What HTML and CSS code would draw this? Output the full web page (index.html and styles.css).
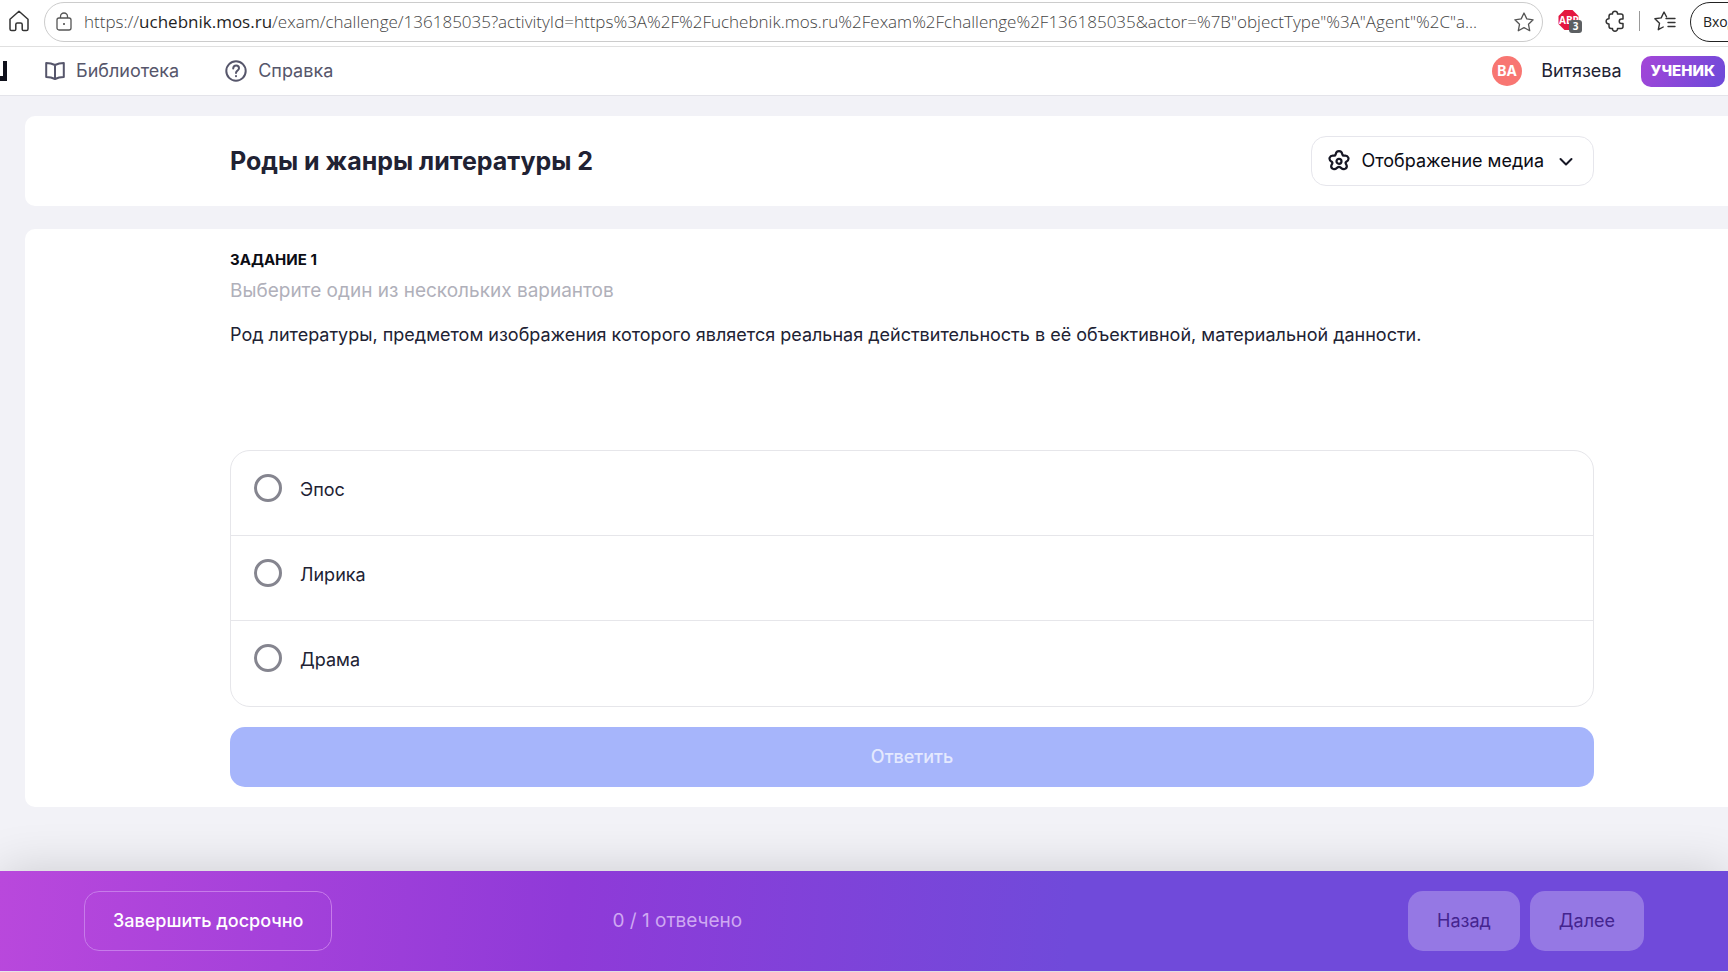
FILE: index.html
```html
<!DOCTYPE html>
<html lang="ru">
<head>
<meta charset="utf-8">
<meta name="viewport" content="width=device-width, initial-scale=1">
<title>Роды и жанры литературы 2</title>
<link rel="stylesheet" href="styles.css">
</head>
<body>
<div class="browser">
  <button class="icon-button" aria-label="Домой">
    <svg width="20" height="22" viewBox="0 0 20 22" fill="none" stroke="#333" stroke-width="1.5" stroke-linejoin="round"><path d="M1 9.2 10 1.2l9 8V19q0 1.6-1.6 1.6h-2.8q-1.4 0-1.4-1.4v-4.6q0-1.6-1.6-1.6H8.400q-1.600 0-1.600 1.600v4.600q0 1.400-1.400 1.400H2.600Q1 20.600 1 19Z"/></svg>
  </button>
  <div class="address">
    <svg width="16" height="20" viewBox="0 0 16 20" fill="none" stroke="#555" stroke-width="1.300"><rect x="1" y="6" width="14" height="12" rx="2"/><path d="M4.500 6V4.500a3.500 3.500 0 0 1 7 0V6"/><circle cx="8" cy="12" r="1" fill="#444" stroke="none"/></svg>
    <span class="url">https://<span class="host">uchebnik.mos.ru</span>/exam/challenge/136185035?activityId=https%3A%2F%2Fuchebnik.mos.ru%2Fexam%2Fchallenge%2F136185035&amp;actor=%7B"objectType"%3A"Agent"%2C"a...</span>
    <button class="icon-button" aria-label="Добавить в избранное">
      <svg width="20" height="20" viewBox="0 0 20 20" fill="none" stroke="#555" stroke-width="1.300" stroke-linejoin="round"><path d="m10 1 2.800 5.900 6.300.9-4.600 4.500 1.200 6.400-5.700-3.100-5.700 3.100 1.200-6.400L.9 7.800l6.300-.9Z"/></svg>
    </button>
  </div>
  <div class="extensions">
    <button class="icon-button abp" aria-label="Adblock Plus">
      <svg width="25" height="24" viewBox="0 0 25 24"><path d="M6.500 1h8l6 6v8l-6 6h-8l-6-6V7Z" fill="#e4173f"/><text x="1" y="15" class="abp-label">ABP</text></svg>
      <span class="badge">3</span>
    </button>
    <button class="icon-button" aria-label="Расширения">
      <svg width="20" height="22" viewBox="0 0 20 22" fill="none" stroke="#333" stroke-width="1.500" stroke-linejoin="round"><path d="M4 6.500Q4 4 6 4h1.500C7 .2 13 .2 12.500 4H16q2 0 2 2v3h-1.500c-3 0-3 4.500 0 4.500H18v3q0 2-2 2h-3.500c.5 3.500-5.500 3.500-5 0H6q-2 0-2-2.500v-2C.2 14 .2 8.500 4 8.800Z"/></svg>
    </button>
    <span class="separator"></span>
    <button class="icon-button" aria-label="Избранное">
      <svg width="22" height="20" viewBox="0 0 22 20" fill="none" stroke="#333" stroke-width="1.400" stroke-linejoin="round" stroke-linecap="round"><path d="M12.500 5.800 10 1 7.200 6.900.9 7.800l4.600 4.500-1.200 6.400 4.900-2.700M12 7.500h9M14 11.500h7M14 15.500h7"/></svg>
    </button>
  </div>
  <button class="sign-in">Вход</button>
</div>

<header class="header">
  <svg class="logo" width="8" height="20" viewBox="0 0 8 20"><path d="M3 0h4v20H0v-5h3Z" fill="#10111c"/></svg>
  <nav class="nav">
    <a href="#library"><svg width="20" height="20" viewBox="0 0 20 20" fill="none" stroke="#56566b" stroke-width="2" stroke-linejoin="round"><path d="M10 4C7 2.500 4 2 1.200 2v14c3 0 6 .5 8.800 2 2.800-1.500 5.800-2 8.800-2V2C16 2 13 2.500 10 4Zm0 0v14"/></svg>Библиотека</a>
    <a href="#help"><svg width="22" height="22" viewBox="0 0 22 22" fill="none" stroke="#56566b" stroke-width="2" stroke-linecap="round"><circle cx="11" cy="11" r="9.700"/><path d="M8.200 8.500c.2-4 5.800-3.700 5.800-.3 0 2.300-3 2.300-3 4.800"/><path d="M11 16v.2"/></svg>Справка</a>
  </nav>
  <div class="user">
    <span class="avatar">ВА</span>
    <span class="user-name">Витязева</span>
    <span class="role">УЧЕНИК</span>
  </div>
</header>

<main class="main">
  <section class="card title-card">
    <h1>Роды и жанры литературы 2</h1>
    <button class="media-button">
      <svg width="22" height="22" viewBox="0 0 22 22" fill="none" stroke="#161725" stroke-width="2.200" stroke-linejoin="round"><path d="M7.600 4.600C8 2.200 9 1.200 11 1.200s3 1 3.400 3.400c.3.900.8 1.200 1.700 1.100 2.200-.4 3.500.2 4.200 1.900.6 1.800 0 3-2 4.200-.8.500-.9 1.200-.4 2 1.300 2 1.200 3.600-.3 4.700-1.500 1.200-3 .8-4.900-.9-1.100-1-2.300-1-3.400 0-1.900 1.700-3.400 2.100-4.900.9-1.500-1.100-1.600-2.700-.3-4.700.5-.8.4-1.500-.4-2-2-1.200-2.600-2.400-2-4.200.7-1.700 2-2.300 4.200-1.900.9.100 1.400-.2 1.700-1.100Z"/><circle cx="11" cy="11.300" r="2.500"/></svg>
      <span>Отображение медиа</span>
      <svg width="14" height="10" viewBox="0 0 14 10" fill="none" stroke="#161725" stroke-width="2" stroke-linecap="round" stroke-linejoin="round"><path d="m1.500 3 5.500 5.500L12.500 3"/></svg>
    </button>
  </section>

  <form class="card task">
    <h2>ЗАДАНИЕ 1</h2>
    <p class="hint">Выберите один из нескольких вариантов</p>
    <p class="question" id="question">Род литературы, предметом изображения которого является реальная действительность в её объективной, материальной данности.</p>
    <div class="options" role="radiogroup" aria-labelledby="question">
      <label class="option"><input type="radio" name="answer" value="epos"><span>Эпос</span></label>
      <label class="option"><input type="radio" name="answer" value="lyric"><span>Лирика</span></label>
      <label class="option"><input type="radio" name="answer" value="drama"><span>Драма</span></label>
    </div>
    <button class="submit" type="button" disabled>Ответить</button>
  </form>
</main>

<footer class="footer">
  <button class="finish">Завершить досрочно</button>
  <span class="progress">0 / 1 отвечено</span>
  <div class="pager">
    <button disabled>Назад</button>
    <button disabled>Далее</button>
  </div>
</footer>
</body>
</html>
```

FILE: styles.css
```css
* { box-sizing: border-box; }

body {
  margin: 0;
  min-height: 100vh;
  display: flex;
  flex-direction: column;
  overflow-x: hidden;
  background: #f2f2f7;
  color: #212233;
  font: 400 18px/24px Inter, "Noto Sans", sans-serif;
}

button { font: inherit; cursor: pointer; }
h1, h2, p { margin: 0; }
svg { display: block; flex: none; }

/* Browser toolbar */
.browser {
  display: flex;
  align-items: center;
  height: 47px;
  padding: 0 0 4px 9px;
  overflow: hidden;
  background: #fff;
  border-bottom: 1px solid #e0e0e0;
  font: 400 17px/24px "Open Sans", "Noto Sans", sans-serif;
}

.icon-button {
  flex: none;
  padding: 0;
  border: 0;
  background: none;
}

.address {
  flex: 1;
  min-width: 0;
  display: flex;
  align-items: center;
  gap: 12px;
  height: 40px;
  margin: 1px 0 0 15px;
  padding: 0 8px 0 11px;
  border: 1px solid #ccc;
  border-radius: 20px;
}

.url {
  flex: 1;
  min-width: 0;
  overflow: hidden;
  white-space: nowrap;
  color: #444;
  font-weight: 300;
}

.host {
  color: #1f1f1f;
  font-weight: 400;
}

.extensions {
  display: flex;
  align-items: center;
  gap: 14px;
  padding: 0 14px 0 15px;
}

.abp {
  position: relative;
  margin-right: 8px;
}

.abp-label {
  fill: #fff;
  font: 700 10px "Open Sans", sans-serif;
}

.badge {
  position: absolute;
  right: 1px;
  bottom: 0;
  width: 13px;
  height: 13px;
  border-radius: 3px;
  background: #5c5f62;
  color: #fff;
  font: 700 10px/13px "Open Sans", sans-serif;
  text-align: center;
}

.separator {
  width: 1px;
  height: 20px;
  background: #999;
}

.sign-in {
  flex: none;
  width: 90px;
  height: 40px;
  margin: 1px -52px 0 0;
  padding: 0 0 0 12px;
  border: 1px solid #222;
  border-radius: 20px;
  background: #fff;
  color: #222;
  font-size: 14px;
  text-align: left;
}

/* Site header */
.header {
  display: flex;
  align-items: center;
  height: 49px;
  padding-right: 3px;
  background: #fff;
  border-bottom: 1px solid #e4e4ea;
}

.nav {
  display: flex;
  gap: 46px;
  margin-left: 37px;
}

.nav a {
  display: flex;
  align-items: center;
  gap: 11px;
  color: #56566b;
  text-decoration: none;
}

.user {
  display: flex;
  align-items: center;
  gap: 19px;
  margin-left: auto;
}

.avatar {
  width: 30px;
  height: 30px;
  border-radius: 50%;
  background: #f87672;
  color: #fff;
  font-size: 14px;
  font-weight: 700;
  line-height: 30px;
  text-align: center;
}

.role {
  height: 31px;
  padding: 0 10px;
  border-radius: 10px;
  background: linear-gradient(120deg, #a446d8, #6c4ad9);
  color: #fff;
  font-size: 15px;
  font-weight: 800;
  line-height: 30px;
}

/* Content */
.main {
  flex: 1;
  display: flex;
  flex-direction: column;
  gap: 23px;
  padding: 20px 0 64px 25px;
}

.card {
  padding: 20px 134px 20px 205px;
  border-radius: 10px 0 0 10px;
  background: #fff;
}

.title-card {
  display: flex;
  align-items: center;
  justify-content: space-between;
}

h1 {
  font-size: 25px;
  font-weight: 700;
  line-height: 32px;
}

.media-button {
  display: flex;
  align-items: center;
  gap: 11px;
  height: 50px;
  padding: 0 20px 0 16px;
  border: 1px solid #e6e6ec;
  border-radius: 15px;
  background: #fff;
  color: #0b0c14;
}

.media-button span { margin-right: 4px; }

.task {
  display: flex;
  flex-direction: column;
}

h2 {
  color: #0b0c14;
  font-size: 15px;
  font-weight: 700;
  line-height: 22px;
}

.hint {
  margin-top: 8px;
  color: #b0b0ba;
  font-size: 19px;
}

.question { margin-top: 20px; }

.options {
  margin-top: 103px;
  padding-bottom: 1px;
  border: 1px solid #e6e6ea;
  border-radius: 20px;
}

.option {
  display: flex;
  align-items: flex-start;
  gap: 18px;
  height: 84px;
  padding: 23px;
}

.option + .option {
  height: 85px;
  border-top: 1px solid #e6e6ea;
}

.option span { line-height: 32px; }

.option input {
  appearance: none;
  width: 28px;
  height: 28px;
  margin: 0;
  border: 3px solid #85858f;
  border-radius: 50%;
}

.option input:checked { border-width: 9px; }

.submit {
  height: 60px;
  margin-top: 20px;
  border: 0;
  border-radius: 15px;
  background: #a6b5fb;
  color: #e4e9fe;
  font-weight: 500;
}

/* Bottom bar */
.footer {
  display: flex;
  align-items: center;
  padding: 20px 84px;
  background: linear-gradient(95deg, #b948dc 0, #8f3ad8 33%, #704ada 62%);
  box-shadow: 0 0 50px rgba(0, 0, 0, 0.16);
  margin-bottom: 1px;
}

.finish {
  height: 60px;
  padding: 0 28px;
  border: 1px solid #c77bea;
  border-radius: 15px;
  background: transparent;
  color: #fff;
  font-weight: 500;
}

.progress {
  margin-left: 280px;
  color: #cfa9f2;
  font-size: 19px;
}

.pager {
  display: flex;
  gap: 10px;
  margin-left: auto;
}

.pager button {
  height: 60px;
  padding: 0 29px;
  border: 0;
  border-radius: 15px;
  background: #9578e4;
  color: #44248f;
}
```
